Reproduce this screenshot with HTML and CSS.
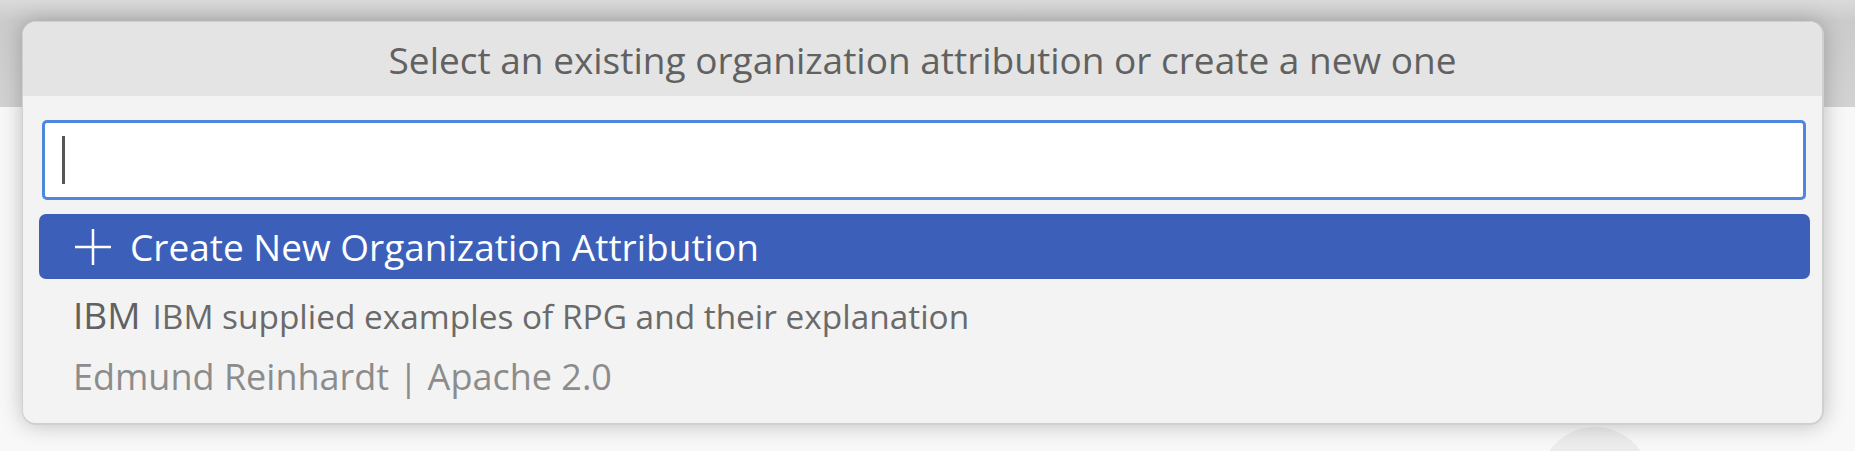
FILE: index.html
```html
<!DOCTYPE html>
<html lang="en">
<head>
<meta charset="utf-8">
<title>Quick pick</title>
<link rel="stylesheet" href="styles.css">
</head>
<body>
<div class="workbench">
  <div class="topband"></div>
  <div class="editor"><div class="blob"></div></div>
</div>
<div class="quick-input">
  <div class="title">Select an existing organization attribution or create a new one</div>
  <div class="body">
    <div class="input"><span class="caret"></span></div>
    <div class="list">
      <div class="row selected">
        <svg class="plus" viewBox="0 0 40 40" width="40" height="40"><path d="M20 2V38M2 20H38" stroke="#fff" stroke-width="2.5" fill="none"/></svg>
        <span class="label">Create New Organization Attribution</span>
      </div>
      <div class="row two-line">
        <div class="line1"><span class="label">IBM</span><span class="desc">IBM supplied examples of RPG and their explanation</span></div>
        <div class="detail">Edmund Reinhardt | Apache 2.0</div>
      </div>
    </div>
  </div>
</div>
</body>
</html>
```

FILE: styles.css
```css
html, body {
  margin: 0;
  padding: 0;
  height: 100%;
  overflow: hidden;
}
body {
  font-family: "Open Sans", "Noto Sans", sans-serif;
  background: #f8f8f8;
}
.workbench {
  display: flex;
  flex-direction: column;
  height: 451px;
  overflow: hidden;
}
.topband {
  height: 107px;
  background: linear-gradient(#dadada, #cbcbcb 20%, #d2d2d2);
}
.editor {
  flex: 1;
  background: #f8f8f8;
  position: relative;
  overflow: hidden;
}
.blob {
  position: absolute;
  left: 1540px;
  top: 320px;
  width: 110px;
  height: 110px;
  border-radius: 50%;
  background: #ececec;
}
.quick-input {
  position: absolute;
  left: 22px;
  top: 21px;
  width: 1799px;
  height: 401px;
  background: #f3f3f3;
  border: 1px solid #d0d0d0;
  border-right-width: 2px;
  border-bottom-width: 2px;
  border-radius: 14px;
  box-shadow: 0 0 22px rgba(0, 0, 0, 0.24);
  display: flex;
  flex-direction: column;
}
.title {
  height: 74px;
  background: #e4e4e4;
  border-radius: 13px 13px 0 0;
  color: #616161;
  font-size: 37px;
  display: flex;
  align-items: center;
  justify-content: center;
}
.body {
  padding: 24px 12px 0 16px;
  display: flex;
  flex-direction: column;
}
.input {
  margin: 0 4px 0 3px;
  height: 74px;
  background: #fff;
  border: 3px solid #4f86df;
  border-radius: 5px;
  display: flex;
  align-items: center;
  padding-left: 17px;
}
.caret {
  width: 3px;
  height: 48px;
  background: #555;
}
.list {
  margin-top: 14px;
  display: flex;
  flex-direction: column;
}
.row {
  border-radius: 7px;
  padding-left: 34px;
}
.selected {
  height: 65px;
  background: #3c60b9;
  color: #fff;
  display: flex;
  align-items: center;
  font-size: 37px;
}
.plus {
  margin-right: 17px;
  flex: none;
}
.two-line {
  height: 132px;
  display: flex;
  flex-direction: column;
  padding-top: 10px;
}
.line1 {
  display: flex;
  align-items: baseline;
  color: #616161;
  height: 63px;
}
.line1 .label {
  font-size: 37px;
  margin-right: 12px;
}
.desc {
  font-size: 33.4px;
  color: #6a6a6a;
}
.detail {
  font-size: 36px;
  color: #8c8c8c;
}
```
